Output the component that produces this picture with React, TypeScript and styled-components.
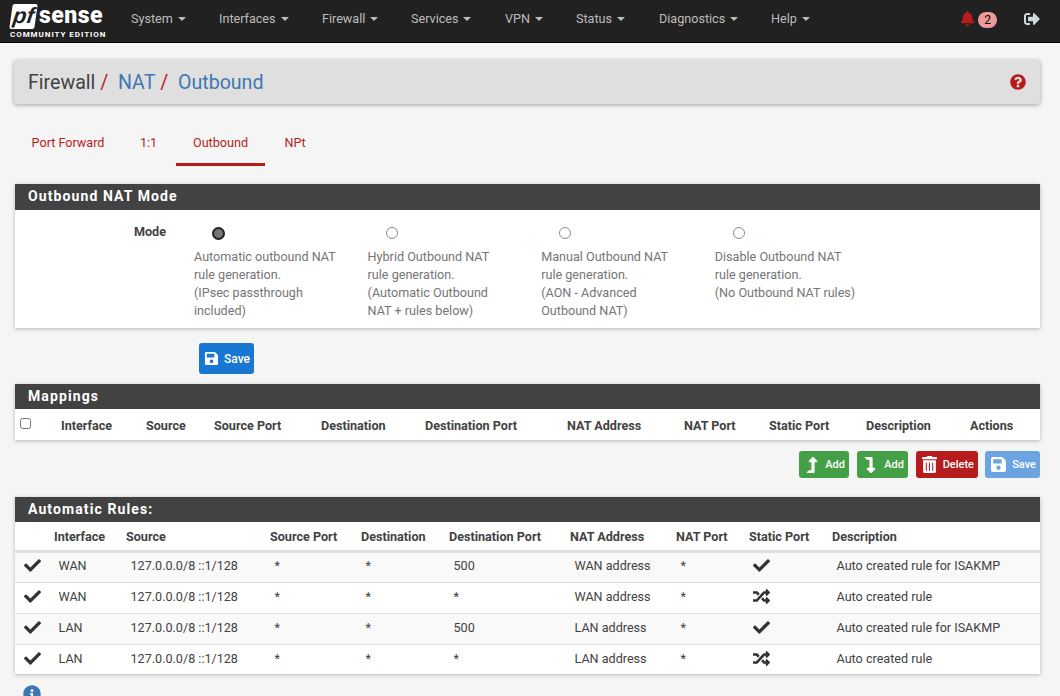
import * as React from 'react';
import styled, { createGlobalStyle } from 'styled-components';
import {
  FaBell, FaSignOutAlt, FaQuestionCircle, FaSave, FaTrashAlt, FaCheck, FaRandom,
  FaLevelUpAlt, FaLevelDownAlt, FaInfoCircle,
} from 'react-icons/fa';

const GlobalStyle = createGlobalStyle`
  html, body {
    margin: 0;
    padding: 0;
    background: #f5f5f5;
    font-family: Roboto, "Liberation Sans", sans-serif;
    font-size: 12.6px;
    color: #424242;
    overflow: hidden;
  }
  * { box-sizing: border-box; }
`;

const Page = styled.div`
  width: 1060px;
  height: 696px;
  overflow: hidden;
`;

const Navbar = styled.nav`
  display: flex;
  align-items: center;
  height: 43px;
  background: #212121;
  border-bottom: 1px solid #000;
  padding-left: 9px;
`;

const Logo = styled.div`
  width: 122px;
  flex: none;
  display: flex;
  flex-direction: column;
  align-items: flex-start;
  color: #fff;
`;

const LogoTop = styled.div`
  display: flex;
  align-items: center;
  height: 26px;
  margin-left: 2px;
`;

const LogoBox = styled.span`
  display: block;
  width: 25px;
  height: 25px;
  background: #fff;
  color: #212121;
  transform: skewX(-8deg);
  border-radius: 2px;
  font: italic 700 22px/23px "Liberation Sans", sans-serif;
  text-align: center;
`;

const LogoWord = styled.span`
  display: block;
  height: 24px;
  font: 900 23px/24px Roboto, sans-serif;
  margin: -1px 0 0 3px;
  letter-spacing: 0.5px;
`;

const LogoSub = styled.span`
  display: block;
  height: 9px;
  margin: 1px 0 0 1px;
  font: 700 8px/9px Roboto, sans-serif;
  letter-spacing: 0.95px;
  white-space: nowrap;
`;

const NavMenu = styled.div`
  display: flex;
  align-items: center;
  flex: 1;
  padding-bottom: 6px;
`;

const NavItem = styled.a<{ $w: number }>`
  width: ${p => p.$w}px;
  color: #bdbdbd;
  font-size: 12.6px;
  white-space: nowrap;
  &::after {
    content: '';
    display: inline-block;
    margin-left: 5px;
    vertical-align: 2px;
    border-top: 4px solid #bdbdbd;
    border-left: 4px solid transparent;
    border-right: 4px solid transparent;
  }
`;

const NavRight = styled.div`
  display: flex;
  align-items: center;
  padding-right: 20px;
`;

const Badge = styled.span`
  width: 19px;
  height: 16px;
  border-radius: 8px;
  background: #ef9a9a;
  color: #000;
  font-size: 12px;
  line-height: 16px;
  text-align: center;
  margin-left: 3px;
  margin-right: 27px;
  margin-top: -2px;
`;

const BellIcon = styled(FaBell)`
  color: #b71c1c;
  font-size: 15px;
  margin-top: -6px;
`;

const ExitIcon = styled(FaSignOutAlt)`
  color: #cfd8dc;
  font-size: 16px;
  margin-top: -4px;
`;

const Content = styled.main`
  padding: 17px 20px 0 15px;
`;

const TitleBar = styled.div`
  display: flex;
  align-items: center;
  justify-content: space-between;
  height: 44px;
  margin-left: -1px;
  padding: 0 14px;
  background: #dfdfdf;
  border-radius: 3px;
  box-shadow: 0 1px 4px rgba(0, 0, 0, 0.35);
  font-size: 19.6px;
`;

const Crumbs = styled.div`
  display: flex;
  align-items: baseline;
`;

const Crumb = styled.span<{ $link?: boolean }>`
  color: ${p => (p.$link ? '#3e78b2' : '#424242')};
`;

const Slash = styled.span`
  color: #b71c1c;
  margin: 0 9.5px 0 5px;
`;

const HelpIcon = styled(FaQuestionCircle)`
  color: #b71c1c;
  font-size: 16px;
`;

const Tabs = styled.div`
  display: flex;
  height: 41px;
  margin-top: 21px;
  margin-bottom: 18px;
`;

const Tab = styled.a<{ $active?: boolean; $w: number }>`
  width: ${p => p.$w}px;
  height: 41px;
  line-height: 36px;
  text-align: center;
  color: #b71c1c;
  font-size: 12.6px;
  border-bottom: 3px solid ${p => (p.$active ? '#b71c1c' : 'transparent')};
`;

const Panel = styled.section`
  background: #fff;
  box-shadow: 0 1px 4px rgba(0, 0, 0, 0.25);
`;

const PanelHeading = styled.h2<{ $h: number }>`
  margin: 0;
  height: ${p => p.$h}px;
  padding: 0 13px;
  background: #424242;
  color: #fff;
  font-size: 14px;
  font-weight: 700;
  line-height: 25px;
  letter-spacing: 1.1px;
`;

const ModeBody = styled.div`
  display: flex;
  height: 118px;
`;

const ModeLabel = styled.div`
  width: 179px;
  padding: 15px 28px 0 0;
  text-align: right;
  font-weight: 700;
  line-height: 14px;
  color: #424242;
`;

const ModeOption = styled.div`
  width: 173.6px;
  padding-top: 17px;
  color: #757575;
  line-height: 18px;
`;

const RadioRow = styled.div`
  height: 13px;
  padding-left: 18px;
  margin-bottom: 8px;
`;

const Radio = styled.span<{ $on?: boolean }>`
  display: block;
  width: ${p => (p.$on ? 13 : 12)}px;
  height: ${p => (p.$on ? 13 : 12)}px;
  border-radius: 50%;
  border: ${p => (p.$on ? '2px solid #212121' : '1px solid #8a8a8a')};
  background: ${p => (p.$on ? '#757575' : '#fff')};
`;

const OptionText = styled.div`
  white-space: pre-line;
`;

const SaveRow = styled.div`
  height: 56px;
  padding: 15px 0 0 184px;
`;

const Button = styled.button<{ $bg: string; $w: number; $h?: number }>`
  display: inline-flex;
  align-items: center;
  justify-content: space-between;
  width: ${p => p.$w}px;
  height: ${p => p.$h ?? 27}px;
  padding: 0 4px 0 5px;
  border: none;
  border-radius: 3px;
  background: ${p => p.$bg};
  color: #fff;
  font-family: inherit;
  font-size: 11px;
  font-weight: 500;
`;

const SaveButton = styled(Button)`
  font-size: 12px;
  justify-content: flex-start;
  gap: 5px;
  & svg { font-size: 15px; }
`;

const ButtonRow = styled.div`
  display: flex;
  justify-content: flex-end;
  gap: 7px;
  padding-top: 11px;
  height: 57px;
  & > :nth-child(-n + 2) { margin-right: 1px; }
`;

const ActionIcon = styled.span<{ $heavy?: boolean }>`
  display: flex;
  font-size: ${p => (p.$heavy ? 16 : 17)}px;
  & svg { stroke: currentColor; stroke-width: ${p => (p.$heavy ? 20 : 0)}px; }
`;

const Table = styled.table`
  width: 100%;
  table-layout: fixed;
  border-collapse: collapse;
`;

const Col = styled.col<{ $w: number }>`
  width: ${p => p.$w}px;
`;

const Th = styled.th<{ $h: number }>`
  height: ${p => p.$h}px;
  padding: 2px 0 0;
  text-align: left;
  font-size: 12.6px;
  font-weight: 700;
  color: #424242;
  white-space: nowrap;
`;

const HeadRow = styled.tr`
  border-bottom: 3px solid #e0e0e0;
`;

const Row = styled.tr<{ $odd: boolean }>`
  height: 31px;
  background: ${p => (p.$odd ? '#f9f9f9' : '#fff')};
  border-bottom: 1px solid #e0e0e0;
  &:last-child { border-bottom: 0; height: 30px; }
  &:last-child td { padding-bottom: 1px; }
`;

const Td = styled.td`
  padding: 0 0 3px 4.5px;
  font-size: 12.6px;
  color: #424242;
  white-space: nowrap;
`;

const IconCell = styled(Td)<{ $left: number }>`
  padding-left: ${p => p.$left}px;
  font-size: 17px;
  color: #333;
  & svg { display: block; }
`;

const Check = styled.input`
  display: block;
  width: 11px;
  height: 11px;
  margin: 0 0 4px 5px;
`;

const InfoIcon = styled(FaInfoCircle)`
  display: block;
  margin: 11px 0 0 8px;
  color: #3e78b2;
  font-size: 18px;
`;

const navItems: [string, number][] = [
  ['System', 88], ['Interfaces', 103], ['Firewall', 89], ['Services', 94], ['VPN', 71],
  ['Status', 83], ['Diagnostics', 112], ['Help', 60],
];

const modes = [
  'Automatic outbound NAT\nrule generation.\n(IPsec passthrough\nincluded)',
  'Hybrid Outbound NAT\nrule generation.\n(Automatic Outbound\nNAT + rules below)',
  'Manual Outbound NAT\nrule generation.\n(AON - Advanced\nOutbound NAT)',
  'Disable Outbound NAT\nrule generation.\n(No Outbound NAT rules)',
];

const mappingCols: [string, number][] = [
  ['', 46], ['Interface', 85], ['Source', 68], ['Source Port', 107], ['Destination', 104],
  ['Destination Port', 142], ['NAT Address', 117], ['NAT Port', 85], ['Static Port', 97],
  ['Description', 104], ['Actions', 70],
];

const autoCols: [string, number][] = [
  ['', 39], ['Interface', 72], ['Source', 144], ['Source Port', 91], ['Destination', 88],
  ['Destination Port', 121], ['NAT Address', 106], ['NAT Port', 73], ['Static Port', 83],
  ['Description', 208],
];

const rules = [
  { iface: 'WAN', port: '500', nat: 'WAN address', isStatic: true, desc: 'Auto created rule for ISAKMP' },
  { iface: 'WAN', port: '*', nat: 'WAN address', isStatic: false, desc: 'Auto created rule' },
  { iface: 'LAN', port: '500', nat: 'LAN address', isStatic: true, desc: 'Auto created rule for ISAKMP' },
  { iface: 'LAN', port: '*', nat: 'LAN address', isStatic: false, desc: 'Auto created rule' },
];

export default function App() {
  return <Page>
    <GlobalStyle />
    <Navbar>
      <Logo>
        <LogoTop>
          <LogoBox>pf</LogoBox>
          <LogoWord>sense</LogoWord>
        </LogoTop>
        <LogoSub>COMMUNITY EDITION</LogoSub>
      </Logo>
      <NavMenu>
        { navItems.map(([name, w]) => <NavItem key={name} $w={w}>{ name }</NavItem>) }
      </NavMenu>
      <NavRight>
        <BellIcon />
        <Badge>2</Badge>
        <ExitIcon />
      </NavRight>
    </Navbar>

    <Content>
      <TitleBar>
        <Crumbs>
          <Crumb>Firewall</Crumb><Slash>/</Slash>
          <Crumb $link>NAT</Crumb><Slash>/</Slash>
          <Crumb $link>Outbound</Crumb>
        </Crumbs>
        <HelpIcon />
      </TitleBar>

      <Tabs>
        <Tab $w={106}>Port Forward</Tab>
        <Tab $w={55}>1:1</Tab>
        <Tab $w={89} $active>Outbound</Tab>
        <Tab $w={60}>NPt</Tab>
      </Tabs>

      <Panel>
        <PanelHeading $h={26}>Outbound NAT Mode</PanelHeading>
        <ModeBody>
          <ModeLabel>Mode</ModeLabel>
          { modes.map((text, i) => <ModeOption key={i}>
            <RadioRow><Radio $on={i === 0} /></RadioRow>
            <OptionText>{ text }</OptionText>
          </ModeOption>) }
        </ModeBody>
      </Panel>

      <SaveRow>
        <SaveButton $bg="#1976d2" $w={55} $h={31}><FaSave />Save</SaveButton>
      </SaveRow>

      <Panel>
        <PanelHeading $h={25}>Mappings</PanelHeading>
        <Table>
          <colgroup>{ mappingCols.map(([name, w]) => <Col key={name} $w={w} />) }</colgroup>
          <thead>
            <tr>
              { mappingCols.map(([name]) => <Th key={name} $h={31}>
                { name || <Check type="checkbox" /> }
              </Th>) }
            </tr>
          </thead>
        </Table>
      </Panel>

      <ButtonRow>
        <Button $bg="#43a047" $w={50}><ActionIcon $heavy><FaLevelUpAlt /></ActionIcon>Add</Button>
        <Button $bg="#43a047" $w={51}><ActionIcon $heavy><FaLevelDownAlt /></ActionIcon>Add</Button>
        <Button $bg="#b71c1c" $w={62}><ActionIcon><FaTrashAlt /></ActionIcon>Delete</Button>
        <Button $bg="#6ba4e0" $w={55}><ActionIcon><FaSave /></ActionIcon>Save</Button>
      </ButtonRow>

      <Panel>
        <PanelHeading $h={25}>Automatic Rules:</PanelHeading>
        <Table>
          <colgroup>{ autoCols.map(([name, w]) => <Col key={name} $w={w} />) }</colgroup>
          <thead>
            <HeadRow>
              { autoCols.map(([name]) => <Th key={name} $h={29}>{ name }</Th>) }
            </HeadRow>
          </thead>
          <tbody>
            { rules.map((r, i) => <Row key={i} $odd={i % 2 === 0}>
              <IconCell $left={9}><FaCheck /></IconCell>
              <Td>{ r.iface }</Td>
              <Td>127.0.0.0/8 ::1/128</Td>
              <Td>*</Td>
              <Td>*</Td>
              <Td>{ r.port }</Td>
              <Td>{ r.nat }</Td>
              <Td>*</Td>
              <IconCell $left={4}>{ r.isStatic ? <FaCheck /> : <FaRandom /> }</IconCell>
              <Td>{ r.desc }</Td>
            </Row>) }
          </tbody>
        </Table>
      </Panel>
      <InfoIcon />
    </Content>
  </Page>;
}
